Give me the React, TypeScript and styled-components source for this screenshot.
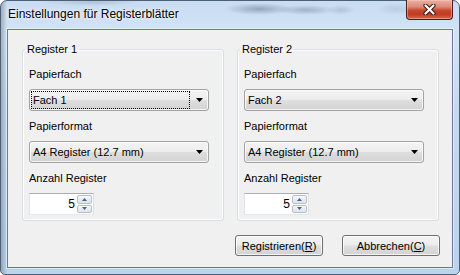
import { FC } from "react"
import styled, { createGlobalStyle, css } from "styled-components"

const GlobalStyle = createGlobalStyle`
  html, body {
    margin: 0;
    padding: 0;
    background: #ffffff;
  }
  body {
    font-family: "Liberation Sans", Arial, sans-serif;
    font-size: 11px;
    color: #000000;
  }
`

const Window = styled.div`
  box-sizing: border-box;
  width: 460px;
  height: 275px;
  display: flex;
  flex-direction: column;
  padding: 0 6px 6px 6px;
  border: 1px solid #4d6076;
  border-radius: 7px 7px 5px 5px;
  background:
    linear-gradient(90deg, rgba(70, 85, 90, 0.35) 0px, rgba(110, 125, 130, 0.25) 3px, transparent 6px),
    radial-gradient(ellipse 34px 6px at 258px 8px, rgba(60, 75, 95, 0.38), transparent),
    radial-gradient(ellipse 30px 5px at 305px 9px, rgba(60, 75, 95, 0.3), transparent),
    radial-gradient(ellipse 14px 5px at 340px 9px, rgba(60, 75, 95, 0.18), transparent),
    radial-gradient(ellipse 50px 4px at 90px 1px, rgba(60, 75, 95, 0.18), transparent),
    radial-gradient(ellipse 20px 6px at 395px 8px, rgba(60, 75, 95, 0.12), transparent),
    linear-gradient(180deg, #c8dcf2 0%, #d2e3f5 12%, #c5d9f0 40%, #bcd3ed 100%);
`

const TitleBar = styled.div`
  height: 28px;
  display: flex;
  align-items: flex-start;
  justify-content: space-between;
`

const Title = styled.span`
  margin: 6px 0 0 1px;
  font-size: 12px;
  line-height: 15px;
  color: #000000;
  text-shadow: 0 0 6px rgba(255, 255, 255, 0.95), 0 0 2px rgba(255, 255, 255, 0.9);
`

const CloseButton = styled.div`
  box-sizing: border-box;
  width: 47px;
  height: 20px;
  margin-top: -1px;
  display: flex;
  align-items: center;
  justify-content: center;
  border: 1px solid #4a1f18;
  border-top: none;
  border-radius: 0 0 4px 4px;
  background: linear-gradient(
    180deg,
    #eab0a3 0%,
    #dd8c78 35%,
    #c7472f 55%,
    #c23a22 75%,
    #d8654c 100%
  );
  box-shadow: inset 0 0 0 1px rgba(255, 210, 200, 0.45);
`

const Client = styled.div`
  flex: 1;
  display: flex;
  flex-direction: column;
  border: 1px solid #6a7c91;
  background: #f0f0f0;
  box-shadow: 0 0 0 1px rgba(255, 255, 255, 0.45);
  padding: 0 12px 11px 14px;
`

const Groups = styled.div`
  display: flex;
  gap: 13px;
  margin-top: 13px;
`

const Group = styled.fieldset`
  box-sizing: border-box;
  width: 202px;
  margin: 0;
  padding: 12px 0 5px 6px;
  border: 1px solid #d5dfe5;
  border-radius: 3px;
  box-shadow: inset 0 0 0 1px rgba(255, 255, 255, 0.8);
  display: flex;
  flex-direction: column;
  gap: 9px;
`

const Legend = styled.legend`
  margin-left: -4px;
  padding: 0 2px;
  line-height: 13px;
`

const Field = styled.div`
  display: flex;
  flex-direction: column;
  gap: 8px;
`

const Label = styled.span`
  line-height: 13px;
`

const buttonFace = css`
  background: linear-gradient(180deg, #f4f4f4 0%, #ececec 48%, #dedede 52%, #d3d3d3 100%);
  box-shadow: inset 0 0 0 1px rgba(255, 255, 255, 0.75);
`

const Combo = styled.div`
  box-sizing: border-box;
  width: 180px;
  height: 22px;
  display: flex;
  align-items: center;
  padding: 1px;
  border: 1px solid #a2a2a2;
  border-radius: 3px;
  ${buttonFace}
`

const ComboValue = styled.span<{ $focused?: boolean }>`
  box-sizing: border-box;
  width: 159px;
  height: 18px;
  display: flex;
  align-items: center;
  padding-left: 1px;
  border: 1px ${({ $focused }) => ($focused ? "dotted #000000" : "solid transparent")};
  line-height: 13px;
`

const ComboArrow = styled.span`
  flex: 1;
  display: flex;
  align-items: center;
  justify-content: center;
  padding-left: 1px;
`

const Spinner = styled.div`
  box-sizing: border-box;
  width: 65px;
  height: 22px;
  display: flex;
  align-items: stretch;
  padding: 1px;
  border: 1px solid #abadb3;
  border-left-color: #e2e3ea;
  border-bottom-color: #e3e9ef;
  border-right-color: #dbdfe6;
  background: #ffffff;
`

const SpinnerValue = styled.span`
  flex: 1;
  display: flex;
  align-items: center;
  justify-content: flex-end;
  padding-right: 2px;
  font-size: 12px;
`

const UpDown = styled.div`
  width: 15px;
  display: flex;
  flex-direction: column;
  gap: 1px;
`

const UpDownButton = styled.div`
  flex: 1;
  display: flex;
  align-items: center;
  justify-content: center;
  border: 1px solid #b7bfcc;
  border-radius: 2px;
  background: linear-gradient(180deg, #f7f9fc 0%, #e8ecf2 50%, #dde3ec 100%);
`

const ButtonRow = styled.div`
  margin-top: auto;
  display: flex;
  justify-content: flex-end;
  gap: 19px;
`

const Button = styled.div<{ $width: number }>`
  box-sizing: border-box;
  width: ${({ $width }) => $width}px;
  height: 21px;
  display: flex;
  align-items: center;
  justify-content: center;
  border: 1px solid #707070;
  border-radius: 3px;
  ${buttonFace}
  u {
    text-decoration-thickness: 1px;
  }
`

const CloseGlyph: FC = () => (
  <svg width="13" height="11" viewBox="0 0 13 11">
    <path d="M2.5 1.5 L10.5 9.5 M10.5 1.5 L2.5 9.5" stroke="#3b1410" strokeWidth="4.2" strokeLinecap="round" />
    <path d="M2.5 1.5 L10.5 9.5 M10.5 1.5 L2.5 9.5" stroke="#ffffff" strokeWidth="2.2" strokeLinecap="round" />
  </svg>
)

const DropArrow: FC = () => (
  <svg width="7" height="4" viewBox="0 0 7 4">
    <polygon points="0,0 7,0 3.5,4" fill="#000000" />
  </svg>
)

const SpinArrow: FC<{ up?: boolean }> = ({ up }) => (
  <svg width="5" height="3" viewBox="0 0 5 3">
    <polygon points={up ? "0,3 5,3 2.5,0" : "0,0 5,0 2.5,3"} fill="#4e6284" />
  </svg>
)

type RegisterProps = {
  title: string
  tray: string
  focused?: boolean
}

const RegisterGroup: FC<RegisterProps> = ({ title, tray, focused }) => (
  <Group>
    <Legend>{title}</Legend>
    <Field>
      <Label>Papierfach</Label>
      <Combo>
        <ComboValue $focused={focused}>{tray}</ComboValue>
        <ComboArrow>
          <DropArrow />
        </ComboArrow>
      </Combo>
    </Field>
    <Field>
      <Label>Papierformat</Label>
      <Combo>
        <ComboValue>A4 Register (12.7 mm)</ComboValue>
        <ComboArrow>
          <DropArrow />
        </ComboArrow>
      </Combo>
    </Field>
    <Field>
      <Label>Anzahl Register</Label>
      <Spinner>
        <SpinnerValue>5</SpinnerValue>
        <UpDown>
          <UpDownButton>
            <SpinArrow up />
          </UpDownButton>
          <UpDownButton>
            <SpinArrow />
          </UpDownButton>
        </UpDown>
      </Spinner>
    </Field>
  </Group>
)

const App: FC = () => (
  <>
    <GlobalStyle />
    <Window>
      <TitleBar>
        <Title>Einstellungen für Registerblätter</Title>
        <CloseButton>
          <CloseGlyph />
        </CloseButton>
      </TitleBar>
      <Client>
        <Groups>
          <RegisterGroup title="Register 1" tray="Fach 1" focused />
          <RegisterGroup title="Register 2" tray="Fach 2" />
        </Groups>
        <ButtonRow>
          <Button $width={88}>
            <span>
              Registrieren(<u>R</u>)
            </span>
          </Button>
          <Button $width={98}>
            <span>
              Abbrechen(<u>C</u>)
            </span>
          </Button>
        </ButtonRow>
      </Client>
    </Window>
  </>
)

export default App
